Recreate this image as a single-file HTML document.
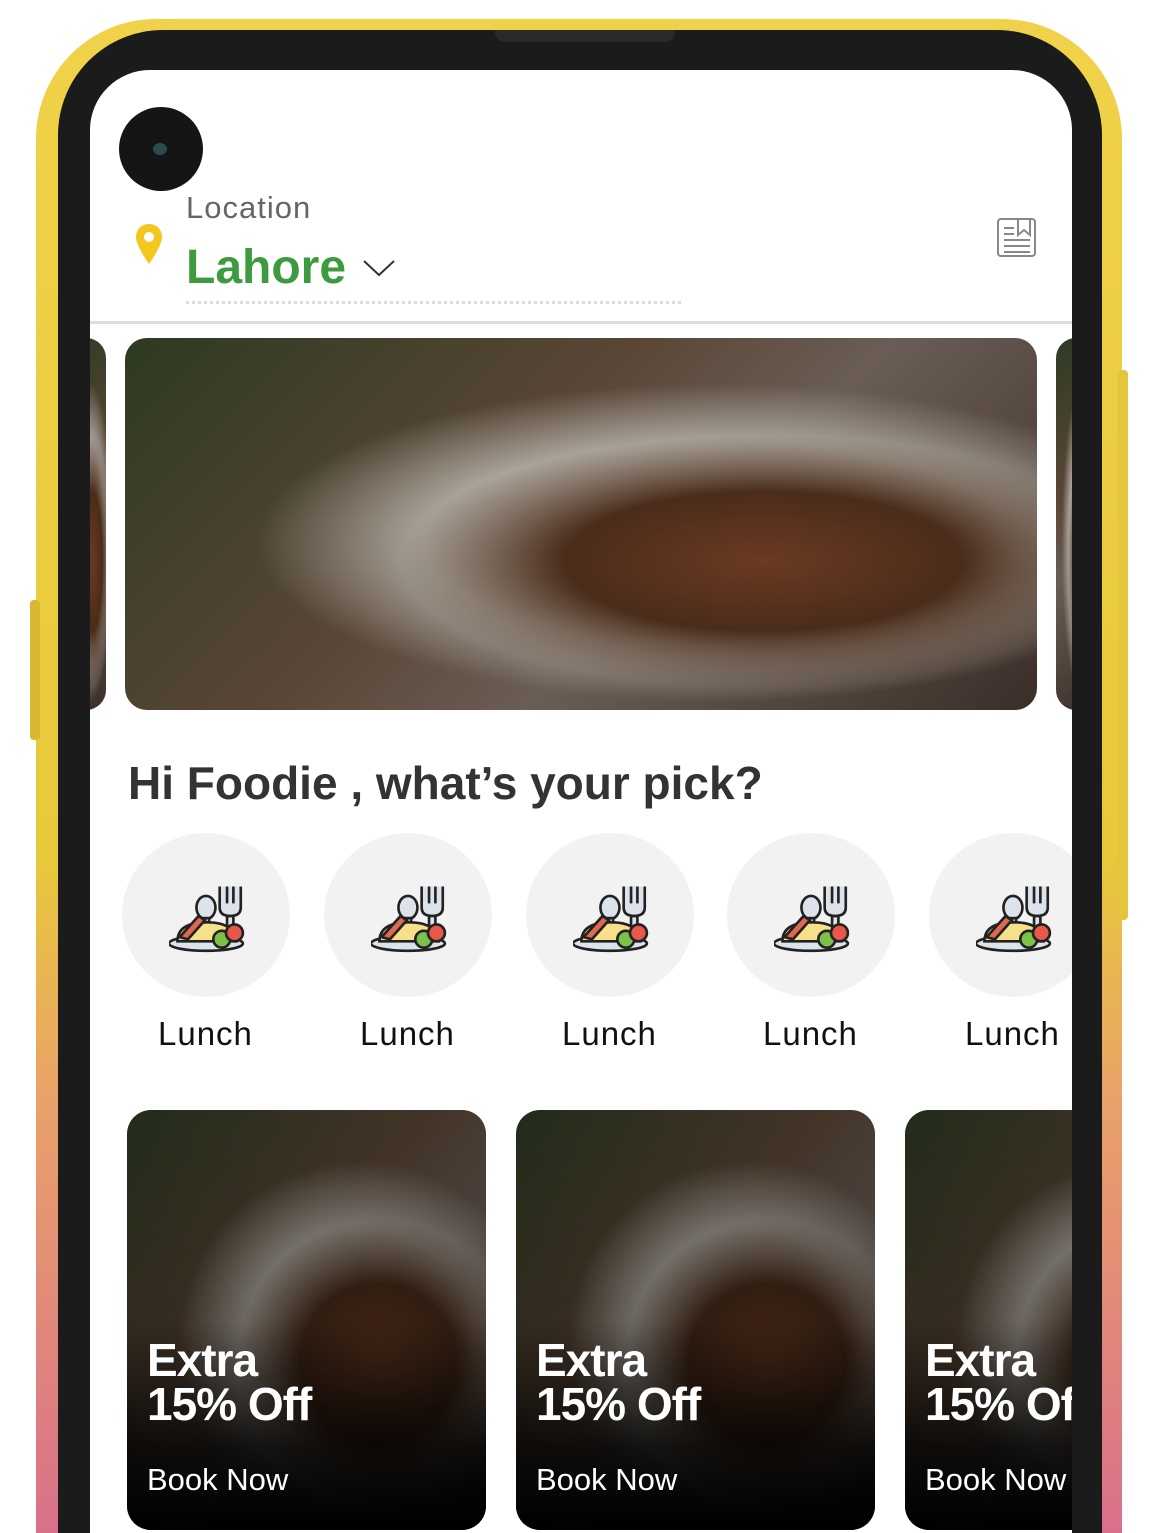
<!DOCTYPE html>
<html><head><style>
*{margin:0;padding:0;box-sizing:border-box}
html,body{width:1151px;height:1533px;overflow:hidden}
body{background:#fff;position:relative;font-family:"Liberation Sans",sans-serif}
.gold{position:absolute;left:36px;top:19px;width:1086px;height:1514px;border-radius:120px 120px 0 0;background:linear-gradient(180deg,#f0d24a 0%,#e8c93a 55%,#e9a06a 72%,#d9708a 100%)}
.btnl{position:absolute;left:30px;top:600px;width:10px;height:140px;background:#d8b830;border-radius:4px}
.btnr{position:absolute;left:1118px;top:370px;width:10px;height:550px;background:#e4c53c;border-radius:4px}
.bezel{position:absolute;left:58px;top:30px;width:1044px;height:1503px;border-radius:105px 105px 0 0;background:#1b1b1b}
.screen{position:absolute;left:90px;top:70px;width:982px;height:1463px;border-radius:60px 60px 0 0;background:#fff;overflow:hidden}
.notch{position:absolute;left:495px;top:30px;width:180px;height:12px;background:#2a2a2a;border-radius:0 0 10px 10px}
.cam{position:absolute;left:29px;top:37px;width:84px;height:84px;border-radius:50%;background:#151515}
.cam:after{content:"";position:absolute;left:34px;top:36px;width:14px;height:12px;border-radius:50%;background:#2f4a4a}
.food{background:radial-gradient(ellipse at 70% 60%,#6b3a22 0%,#4a2c1a 22%,transparent 40%),radial-gradient(ellipse at 65% 55%,#cfc9c0 0%,#a9a39a 35%,transparent 55%),radial-gradient(ellipse at 45% 60%,#3f7a2a 0%,transparent 20%),linear-gradient(135deg,#2d3a22,#5a4636 40%,#6a5d55 60%,#3b2d27)}
.circ{position:absolute;top:763px;width:168px;height:164px;border-radius:50%;background:#f2f2f2}
.lbl{position:absolute;top:945px;font-size:33px;color:#111;letter-spacing:1px}
.card{position:absolute;top:1040px;width:359px;height:420px;border-radius:24px;overflow:hidden}
.card .sh{position:absolute;inset:0;background:linear-gradient(180deg,rgba(0,0,0,.25) 0%,rgba(0,0,0,.35) 50%,rgba(0,0,0,.85) 80%,#000 100%)}
.card .t{position:absolute;left:20px;top:228px;color:#fff;font-weight:bold;font-size:46px;line-height:44px;letter-spacing:-1px}
.card .b{position:absolute;left:20px;top:352px;color:#fff;font-size:31px}
</style></head><body>
<div class="gold"></div><div class="btnl"></div><div class="btnr"></div>
<div class="bezel"></div><div class="notch"></div>
<div class="screen">
 <div class="cam"></div>
 <div style="position:absolute;left:96px;top:120px;font-size:31px;color:#666;letter-spacing:1px">Location</div>
 <svg style="position:absolute;left:43px;top:152px" width="32" height="44" viewBox="0 0 32 44"><path d="M16 2C8 2 3 8 3 15c0 9 13 27 13 27s13-18 13-27C29 8 24 2 16 2z" fill="#f2c81e"/><circle cx="16" cy="15" r="5" fill="#fff"/></svg>
 <div style="position:absolute;left:96px;top:170px;font-size:48px;font-weight:bold;color:#3e9a3e">Lahore</div>
 <svg style="position:absolute;left:272px;top:188px" width="34" height="20"><path d="M2 3l15 14L32 3" stroke="#333" stroke-width="2" fill="none"/></svg>
 <div style="position:absolute;left:96px;top:231px;width:495px;border-top:3px dotted #ddd"></div>
 <svg style="position:absolute;left:906px;top:146px" width="42" height="42" viewBox="0 0 42 42" fill="none" stroke="#888" stroke-width="2"><rect x="2" y="3" width="37" height="37" rx="3"/><path d="M8 12h10M8 18h10M8 24h26M8 30h26M8 36h26M22 3v16l6-5 6 5V3"/></svg>
 <div style="position:absolute;left:0;top:251px;width:982px;height:3px;background:#ddd"></div>
 <div class="food" style="position:absolute;left:-30px;top:268px;width:46px;height:372px;border-radius:20px"></div>
 <div class="food" style="position:absolute;left:35px;top:268px;width:912px;height:372px;border-radius:22px"></div>
 <div class="food" style="position:absolute;left:966px;top:268px;width:40px;height:372px;border-radius:20px"></div>
 <div style="position:absolute;left:38px;top:686px;font-size:46px;font-weight:bold;color:#333">Hi Foodie , what’s your pick?</div>
 <div class="circ" style="left:32px"></div><div class="circ" style="left:234px"></div><div class="circ" style="left:436px"></div><div class="circ" style="left:637px"></div><div class="circ" style="left:839px"></div>
 <div class="lbl" style="left:68px">Lunch</div><div class="lbl" style="left:270px">Lunch</div><div class="lbl" style="left:472px">Lunch</div><div class="lbl" style="left:673px">Lunch</div><div class="lbl" style="left:875px">Lunch</div>
 <div class="card food" style="left:37px"><div class="sh"></div><div class="t">Extra<br>15% Off</div><div class="b">Book Now</div></div>
 <div class="card food" style="left:426px"><div class="sh"></div><div class="t">Extra<br>15% Off</div><div class="b">Book Now</div></div>
 <div class="card food" style="left:815px"><div class="sh"></div><div class="t">Extra<br>15% Off</div><div class="b">Book Now</div></div>
</div>
<svg width="0" height="0" style="position:absolute"><defs><g id="ic" stroke="#222" stroke-width="2.5"><ellipse cx="35" cy="28" rx="9" ry="11" fill="#dde3ea"/><rect x="32" y="38" width="6" height="24" fill="#dde3ea"/><path d="M48 8v20q0 8 10 8q10 0 10-8V8M55 8v16M61 8v16M55 36h6v26h-6z" fill="#dde3ea"/><ellipse cx="35" cy="62" rx="35" ry="7" fill="#dde3ea"/><path d="M8 60q0-18 28-18q26 0 28 18z" fill="#f6e08a"/><path d="M10 56l18-20 6 4-16 18z" fill="#e06850"/><circle cx="50" cy="58" r="8" fill="#7cc24a"/><circle cx="62" cy="52" r="8" fill="#e8584a"/></g></defs></svg>
<svg style="position:absolute;left:169px;top:878px" width="76" height="76" viewBox="0 0 72 72"><use href="#ic"/></svg>
<svg style="position:absolute;left:371px;top:878px" width="76" height="76" viewBox="0 0 72 72"><use href="#ic"/></svg>
<svg style="position:absolute;left:573px;top:878px" width="76" height="76" viewBox="0 0 72 72"><use href="#ic"/></svg>
<svg style="position:absolute;left:774px;top:878px" width="76" height="76" viewBox="0 0 72 72"><use href="#ic"/></svg>
<svg style="position:absolute;left:976px;top:878px" width="76" height="76" viewBox="0 0 72 72"><use href="#ic"/></svg>
</body></html>
